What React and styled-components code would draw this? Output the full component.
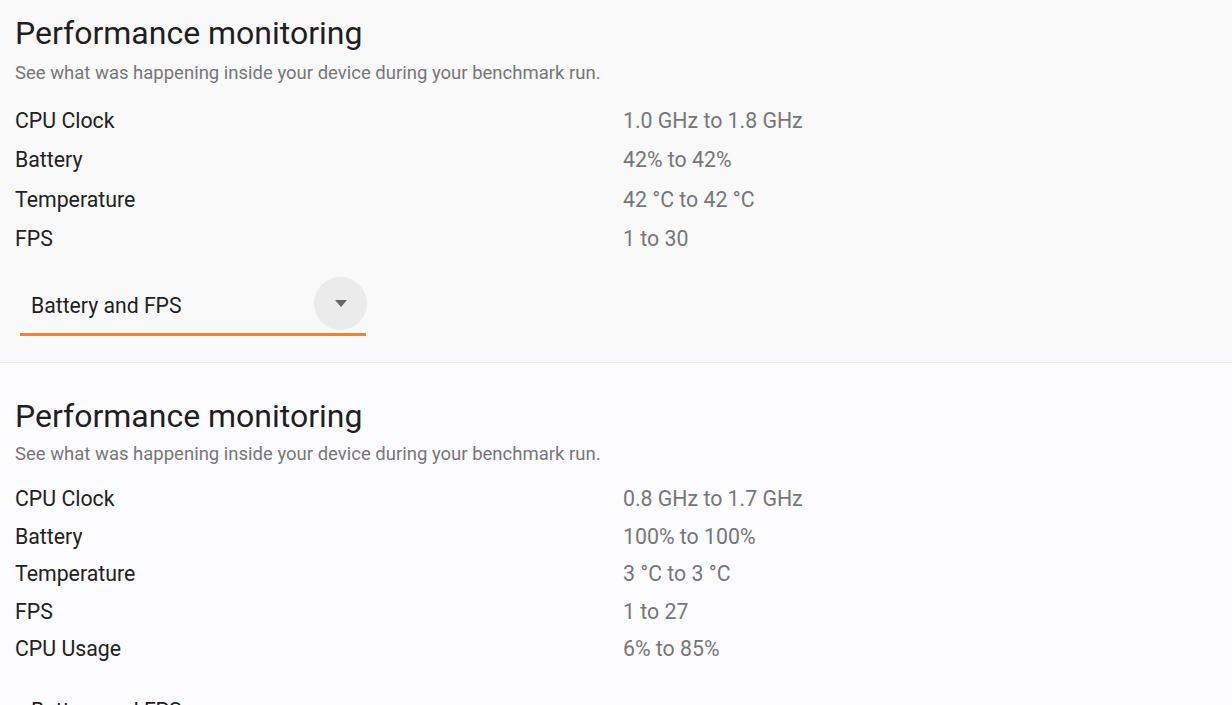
import React from "react";
import styled, { createGlobalStyle } from "styled-components";

const GlobalStyle = createGlobalStyle`
  body {
    margin: 0;
    background: #f9f9fa;
    font-family: Roboto, "Liberation Sans", sans-serif;
    overflow: hidden;
  }
`;

const sections = [
    {
        rows: [
            ["CPU Clock", "1.0 GHz to 1.8 GHz"],
            ["Battery", "42% to 42%"],
            ["Temperature", "42 °C to 42 °C"],
            ["FPS", "1 to 30"],
        ],
        rowHeight: 39.3,
        tone: "#f9f9fa",
    },
    {
        rows: [
            ["CPU Clock", "0.8 GHz to 1.7 GHz"],
            ["Battery", "100% to 100%"],
            ["Temperature", "3 °C to 3 °C"],
            ["FPS", "1 to 27"],
            ["CPU Usage", "6% to 85%"],
        ],
        rowHeight: 37.5,
        tone: "#fdfcfe",
    },
];

const App = () => {
    return (
        <Page>
            <GlobalStyle />
            {sections.map((section, i) => {
                const first = i === 0;
                return (
                    <Section key={i} $tone={section.tone} $first={first}>
                        <Title>Performance monitoring</Title>
                        <Subtitle $first={first}>
                            See what was happening inside your device during your benchmark run.
                        </Subtitle>
                        <Stats $first={first}>
                            {section.rows.map(([label, value]) => (
                                <StatRow key={label} $h={section.rowHeight}>
                                    <Label>{label}</Label>
                                    <Value>{value}</Value>
                                </StatRow>
                            ))}
                        </Stats>
                        <Select $first={first} $active={first}>
                            <SelectText>Battery and FPS</SelectText>
                            <ArrowButton $active={first}>
                                <svg width="12" height="7" viewBox="0 0 12 7">
                                    <path d="M0 0 L12 0 L6 7 Z" fill="#666" />
                                </svg>
                            </ArrowButton>
                        </Select>
                    </Section>
                );
            })}
        </Page>
    );
};

const Page = styled.div`
  width: 1232px;
  height: 705px;
  overflow: hidden;
`;

const Section = styled.section`
  background: ${(p) => p.$tone};
  padding: ${(p) => (p.$first ? "14px 0 26px 15px" : "34px 0 0 15px")};
  border-bottom: ${(p) => (p.$first ? "1px solid #ececee" : "none")};
  box-shadow: ${(p) => (p.$first ? "0 1px 2px rgba(0,0,0,0.04)" : "none")};
`;

const Title = styled.h1`
  margin: 0;
  font-size: 32px;
  font-weight: 400;
  line-height: 38px;
  color: #1f1f1f;
`;

const Subtitle = styled.p`
  margin: ${(p) => (p.$first ? "9px" : "7px")} 0 0;
  font-size: 18.5px;
  line-height: 24px;
  color: #777;
`;

const Stats = styled.div`
  margin-top: ${(p) => (p.$first ? "16px" : "14px")};
  display: flex;
  flex-direction: column;
`;

const StatRow = styled.div`
  display: grid;
  grid-template-columns: 608px 1fr;
  height: ${(p) => p.$h}px;
  align-items: center;
  font-size: 21.3px;
`;

const Label = styled.span`
  color: #222;
`;

const Value = styled.span`
  color: #777;
`;

const Select = styled.div`
  margin: ${(p) => (p.$first ? "20px" : "15px")} 0 0 5px;
  width: 346px;
  height: 58px;
  display: flex;
  align-items: center;
  justify-content: space-between;
  border-bottom: 3px solid ${(p) => (p.$active ? "#e8843c" : "#cfcfd2")};
  box-sizing: border-box;
`;

const SelectText = styled.span`
  margin-left: 11px;
  font-size: 21.2px;
  color: #1f1f1f;
`;

const ArrowButton = styled.div`
  width: 53px;
  height: 53px;
  border-radius: 50%;
  background: ${(p) => (p.$active ? "#ebebec" : "transparent")};
  display: flex;
  align-items: center;
  justify-content: center;
  margin-right: -1px;
  margin-top: ${(p) => (p.$active ? "-4px" : "8px")};
`;

export default App;
